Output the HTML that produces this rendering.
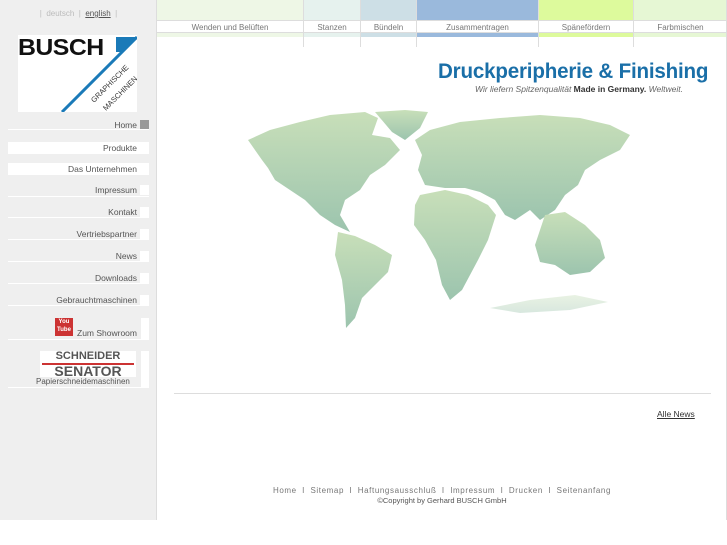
<!DOCTYPE html>
<html><head><meta charset="utf-8"><style>
*{margin:0;padding:0;box-sizing:border-box}
body{width:727px;height:545px;background:#fff;font-family:"Liberation Sans",sans-serif;position:relative;overflow:hidden}
#side{position:absolute;left:0;top:0;width:157px;height:520px;background:#efefef;border-right:1px solid #ddd}
.lang{position:absolute;top:9px;left:0;width:157px;text-align:center;font-size:8px;color:#bbb}
.lang u{color:#555}
.logo{position:absolute;left:18px;top:35px;width:119px;height:77px;background:#fff;overflow:hidden}
.nav{position:absolute;left:8px;width:141px;height:12px;font-size:8.5px;color:#555;text-align:right;padding-right:12px;line-height:12px}
.nav::after{content:"";position:absolute;right:0;top:1px;width:9px;height:10px;background:#fff}
.nav.h::after{background:#999}
.nav.w{background:#fff}
.ln{position:absolute;left:8px;width:141px;height:1px;background:#fff}
.tab{position:absolute;top:0;height:47px;border-right:1px solid #ddd}
.tab .c{height:20px}
.tab .l{height:13px;background:#fff;font-size:8px;color:#777;text-align:center;line-height:13px;border-top:1px solid #ddd;border-bottom:1px solid #ddd}
.tab .s{height:4px}
.foot{position:absolute;top:486px;left:157px;width:570px;text-align:center;font-size:8px;color:#777;letter-spacing:0.6px;word-spacing:-1px}
</style></head><body>
<div id="side">
<div class="lang">|&nbsp; deutsch &nbsp;|&nbsp; <u>english</u> &nbsp;|</div>
<div class="logo">
<div style="position:absolute;left:0;top:-1px;font:bold 23px 'Liberation Sans',sans-serif;color:#111;letter-spacing:-0.5px;transform:scaleX(1.08);transform-origin:left">BUSCH</div>
<svg width="119" height="77" style="position:absolute;left:0;top:0"><polygon points="98,2 119,2 104,17 98,17" fill="#1a7ab8"/><line x1="119" y1="2" x2="44" y2="77" stroke="#1a7ab8" stroke-width="3"/>
<text x="76" y="68" font-size="7.5" fill="#333" transform="rotate(-45 76 68)" font-family="Liberation Sans">GRAPHISCHE</text>
<text x="88" y="76" font-size="7.5" fill="#333" transform="rotate(-45 88 76)" font-family="Liberation Sans">MASCHINEN</text></svg>
</div>
<div class="nav h" style="top:119px">Home</div><div class="ln" style="top:129px"></div>
<div class="nav w" style="top:142px">Produkte</div>
<div class="nav w" style="top:163px">Das Unternehmen</div>
<div class="nav" style="top:184px">Impressum</div><div class="ln" style="top:196px"></div>
<div class="nav" style="top:206px">Kontakt</div><div class="ln" style="top:217px"></div>
<div class="nav" style="top:228px">Vertriebspartner</div><div class="ln" style="top:239px"></div>
<div class="nav" style="top:250px">News</div><div class="ln" style="top:261px"></div>
<div class="nav" style="top:272px">Downloads</div><div class="ln" style="top:283px"></div>
<div class="nav" style="top:294px">Gebrauchtmaschinen</div><div class="ln" style="top:305px"></div>
<div style="position:absolute;left:141px;top:318px;width:8px;height:21px;background:#fff"></div>
<div style="position:absolute;left:55px;top:318px;width:18px;height:18px;background:#c33;color:#fff;font-size:6px;font-weight:bold;text-align:center;line-height:8px">You<br>Tube</div>
<div style="position:absolute;left:77px;top:328px;font-size:8.5px;color:#555">Zum Showroom</div>
<div class="ln" style="top:339px"></div>
<div style="position:absolute;left:141px;top:351px;width:8px;height:36px;background:#fff"></div>
<div style="position:absolute;left:40px;top:351px;width:96px;height:26px;background:#fff;text-align:center;font-weight:bold;color:#555;font-size:11px;line-height:11px">SCHNEIDER<div style="height:2px;background:#c33;margin:1px 2px"></div><span style="font-size:14px">SENATOR</span></div>
<div style="position:absolute;left:36px;top:377px;font-size:8px;color:#555">Papierschneidemaschinen</div>
<div class="ln" style="top:387px"></div>
</div>
<div class="tab" style="left:157px;width:147px"><div class="c" style="background:#eef7e6"></div><div class="l">Wenden und Belüften</div><div class="s" style="background:#eef7e6"></div></div>
<div class="tab" style="left:304px;width:57px"><div class="c" style="background:#e6f2ee"></div><div class="l">Stanzen</div><div class="s" style="background:#e6f2ee"></div></div>
<div class="tab" style="left:361px;width:56px"><div class="c" style="background:#cddfe6"></div><div class="l">Bündeln</div><div class="s" style="background:#cddfe6"></div></div>
<div class="tab" style="left:417px;width:122px"><div class="c" style="background:#9ab9dc"></div><div class="l">Zusammentragen</div><div class="s" style="background:#9ab9dc"></div></div>
<div class="tab" style="left:539px;width:95px"><div class="c" style="background:#ddfa9c"></div><div class="l">Spänefördern</div><div class="s" style="background:#ddfa9c"></div></div>
<div class="tab" style="left:634px;width:93px;border-right:none"><div class="c" style="background:#e6f7d4"></div><div class="l">Farbmischen</div><div class="s" style="background:#e6f7d4"></div></div>
<div style="position:absolute;left:438px;top:60px;font-size:21px;font-weight:bold;color:#1a6fa8;letter-spacing:-0.2px;transform:scaleX(0.98);transform-origin:left;white-space:nowrap">Druckperipherie &amp; Finishing</div>
<div style="position:absolute;left:475px;top:84px;font-size:8.5px;color:#666;font-style:italic;white-space:nowrap">Wir liefern Spitzenqualität <b style="font-style:normal;color:#333">Made in Germany.</b> Weltweit.</div>
<svg style="position:absolute;left:0;top:0" width="727" height="545">
<defs><linearGradient id="g" x1="0" y1="0" x2="0" y2="1"><stop offset="0" stop-color="#c8dfb9"/><stop offset="1" stop-color="#9cc4ae"/></linearGradient></defs>
<g fill="url(#g)">
<path d="M248,140 L270,130 L300,122 L330,115 L365,112 L378,118 L372,135 L390,138 L400,150 L385,165 L370,175 L360,190 L345,200 L340,215 L350,232 L335,225 L320,215 L305,200 L290,190 L275,180 L268,168 L262,160 Z"/>
<path d="M375,112 L405,110 L428,112 L420,128 L405,140 L392,132 Z"/>
<path d="M338,232 L355,236 L375,245 L392,255 L388,272 L375,285 L362,298 L355,318 L346,328 L345,305 L342,280 L335,255 Z"/>
<path d="M420,195 L445,190 L468,195 L488,205 L496,215 L488,240 L478,260 L462,290 L450,300 L442,285 L436,260 L425,240 L414,225 L415,205 Z"/>
<path d="M415,140 L430,130 L460,122 L500,118 L540,115 L580,118 L610,125 L630,135 L620,150 L600,160 L585,170 L578,185 L565,195 L555,210 L540,220 L530,210 L515,220 L505,215 L495,200 L480,192 L465,188 L445,188 L425,185 L418,170 L422,155 Z"/>
<path d="M545,215 L565,212 L585,225 L600,240 L605,258 L590,272 L570,275 L555,265 L540,262 L535,245 Z"/>
<path d="M490,308 L530,300 L575,295 L608,302 L570,310 L520,313 Z" opacity=".4"/>
</g></svg>
<div style="position:absolute;left:174px;top:393px;width:537px;height:1px;background:#ddd"></div>
<div style="position:absolute;left:657px;top:409px;font-size:8.5px;color:#333;text-decoration:underline">Alle News</div>
<div class="foot">Home &nbsp; I &nbsp; Sitemap &nbsp; I &nbsp; Haftungsausschluß &nbsp; I &nbsp; Impressum &nbsp; I &nbsp; Drucken &nbsp; I &nbsp; Seitenanfang</div>
<div style="position:absolute;top:496px;left:157px;width:570px;text-align:center;font-size:7.5px;color:#555">©Copyright by Gerhard BUSCH GmbH</div>
<div style="position:absolute;left:726px;top:0;width:1px;height:520px;background:#ddd"></div>
</body></html>
